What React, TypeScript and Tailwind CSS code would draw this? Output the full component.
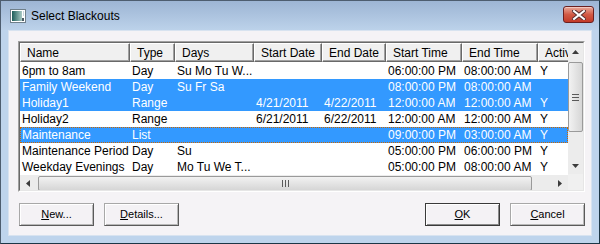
import type { ReactNode } from 'react'

type Row = {
  name: string
  type: string
  days: string
  start: string
  end: string
  st: string
  et: string
  act: string
  sel?: boolean
  focus?: boolean
}

const cols = [
  { key: 'name', label: 'Name', w: 'w-[110px]' },
  { key: 'type', label: 'Type', w: 'w-[45px]' },
  { key: 'days', label: 'Days', w: 'w-[79px]' },
  { key: 'start', label: 'Start Date', w: 'w-[68px]' },
  { key: 'end', label: 'End Date', w: 'w-[64px]' },
  { key: 'st', label: 'Start Time', w: 'w-[76px]' },
  { key: 'et', label: 'End Time', w: 'w-[76px]' },
  { key: 'act', label: 'Active', w: 'w-[50px]' },
] as const

const rows: Row[] = [
  { name: '6pm to 8am', type: 'Day', days: 'Su Mo Tu W...', start: '', end: '', st: '06:00:00 PM', et: '08:00:00 AM', act: 'Y' },
  { name: 'Family Weekend', type: 'Day', days: 'Su Fr Sa', start: '', end: '', st: '08:00:00 PM', et: '08:00:00 AM', act: '', sel: true },
  { name: 'Holiday1', type: 'Range', days: '', start: '4/21/2011', end: '4/22/2011', st: '12:00:00 AM', et: '12:00:00 AM', act: 'Y', sel: true },
  { name: 'Holiday2', type: 'Range', days: '', start: '6/21/2011', end: '6/22/2011', st: '12:00:00 AM', et: '12:00:00 AM', act: 'Y' },
  { name: 'Maintenance', type: 'List', days: '', start: '', end: '', st: '09:00:00 PM', et: '03:00:00 AM', act: 'Y', sel: true, focus: true },
  { name: 'Maintenance Period', type: 'Day', days: 'Su', start: '', end: '', st: '05:00:00 PM', et: '06:00:00 PM', act: 'Y' },
  { name: 'Weekday Evenings', type: 'Day', days: 'Mo Tu We T...', start: '', end: '', st: '05:00:00 PM', et: '08:00:00 AM', act: 'Y' },
]

function Tri({ dir }: { dir: 'up' | 'down' | 'left' | 'right' }) {
  const pts = {
    up: '0,4 7,4 3.5,0',
    down: '0,0 7,0 3.5,4',
    left: '4,0 4,7 0,3.5',
    right: '0,0 0,7 4,3.5',
  }[dir]
  const vert = dir === 'up' || dir === 'down'
  return (
    <svg width={vert ? 7 : 4} height={vert ? 4 : 7} viewBox={vert ? '0 0 7 4' : '0 0 4 7'}>
      <polygon points={pts} fill="#3c3c3c" />
    </svg>
  )
}

function Btn({ children, def }: { children: ReactNode; def?: boolean }) {
  return (
    <div
      className={`w-[75px] h-[23px] flex items-center justify-center text-[11px] text-black bg-[#f4f2f5] ${
        def
          ? 'border border-[#3a3a3a] shadow-[inset_1px_1px_0_#ffffff,inset_-1px_-1px_0_#8a8a8a]'
          : 'border border-[#a8a8a8] border-r-[#5a5a5a] border-b-[#5a5a5a] shadow-[inset_1px_1px_0_#ffffff,inset_-1px_-1px_0_#b8b8b8]'
      }`}
    >
      {children}
    </div>
  )
}

function TitleIcon() {
  return (
    <svg width="16" height="14" viewBox="0 0 16 14">
      <defs>
        <linearGradient id="ti" x1="0" y1="0" x2="1" y2="0">
          <stop offset="0" stopColor="#1d5e5a" />
          <stop offset="1" stopColor="#a9c9c4" />
        </linearGradient>
      </defs>
      <rect x="0.5" y="0.5" width="15" height="13" fill="#ffffff" stroke="#6f7f8a" />
      <rect x="2" y="2" width="10" height="10" fill="url(#ti)" />
      <rect x="12" y="9" width="2" height="3" fill="#4c5a64" />
      <rect x="13" y="2" width="1" height="5" fill="#c9d6dc" />
    </svg>
  )
}

function CloseX() {
  return (
    <svg width="14" height="10" viewBox="0 0 14 10">
      <path d="M2 1 L12 9 M12 1 L2 9" stroke="#5a3030" strokeWidth="4" strokeLinecap="square" />
      <path d="M2 1 L12 9 M12 1 L2 9" stroke="#ffffff" strokeWidth="2" strokeLinecap="square" />
    </svg>
  )
}

export default function App() {
  return (
    <div
      className="w-[600px] h-[244px] flex flex-col border border-[#4d5d6f] border-r-[#1c3646] border-b-[#1c3646] bg-[#bed4ec] overflow-hidden"
      style={{ fontFamily: '"Liberation Sans", Arial, sans-serif' }}
    >
      {/* title bar */}
      <div className="h-[29px] flex items-center pl-[9px] pr-[5px] bg-gradient-to-b from-[#9db5d4] to-[#bcd2ea]">
        <TitleIcon />
        <span className="ml-[5px] text-[12px] text-black">Select Blackouts</span>
        <div className="ml-auto mt-[-2px] w-[31px] h-[17px] rounded-[3px] border border-[#6b2020] flex items-center justify-center bg-gradient-to-b from-[#e8a89a] via-[#d25a45] to-[#c23a28] shadow-[inset_0_1px_0_#f4c8be]">
          <CloseX />
        </div>
      </div>

      {/* client area */}
      <div className="flex-1 mx-[7px] mb-[7px] flex flex-col bg-[#f5f3f6] border border-[#d8e3f0] pl-[9px] pr-[6px] pt-[10px]">
        {/* list view */}
        <div className="w-[567px] h-[151px] border border-[#a0a0a0] border-r-white border-b-white flex">
          <div className="flex-1 border border-[#696969] border-r-[#e6e6e6] border-b-[#e6e6e6] bg-white flex">
            <div className="w-[548px] flex flex-col overflow-hidden">
              {/* header */}
              <div className="h-[19px] flex shrink-0 bg-[#f0f0f0]">
                {cols.map(c => (
                  <div
                    key={c.key}
                    className={`${c.w} shrink-0 h-full flex items-center pl-[6px] text-[12px] text-black whitespace-nowrap overflow-hidden border border-white border-r-[#696969] border-b-[#696969] shadow-[inset_-1px_-1px_0_#a0a0a0]`}
                  >
                    {c.label}
                  </div>
                ))}
              </div>
              {/* rows */}
              <div className="h-[113px] flex flex-col pt-[1px]">
                {rows.map(r => (
                  <div
                    key={r.name}
                    className={`h-[16px] flex shrink-0 text-[12px] whitespace-nowrap ${
                      r.sel ? 'bg-[#3399ff] text-white' : 'text-black'
                    } ${r.focus ? 'outline outline-1 outline-dotted outline-[#cc6600] -outline-offset-1' : ''}`}
                  >
                    {cols.map(c => (
                      <div key={c.key} className={`${c.w} shrink-0 pl-[2px] leading-[16px] overflow-hidden`}>
                        {r[c.key]}
                      </div>
                    ))}
                  </div>
                ))}
              </div>
              {/* horizontal scrollbar */}
              <div className="h-[16px] flex items-center bg-[#ececec] shrink-0">
                <div className="w-[16px] h-full flex items-center justify-center">
                  <Tri dir="left" />
                </div>
                <div className="ml-[2px] w-[494px] h-[15px] rounded-[2px] border border-[#9a9a9a] bg-gradient-to-b from-[#f2f2f2] to-[#d6d6d6] flex items-center justify-center gap-[2px]">
                  <div className="w-[1px] h-[7px] bg-[#5a5a5a]" />
                  <div className="w-[1px] h-[7px] bg-[#5a5a5a]" />
                  <div className="w-[1px] h-[7px] bg-[#5a5a5a]" />
                </div>
                <div className="flex-1" />
                <div className="w-[16px] h-full flex items-center justify-center">
                  <Tri dir="right" />
                </div>
              </div>
            </div>
            {/* vertical scrollbar */}
            <div className="flex-1 flex flex-col bg-[#ececec]">
              <div className="h-[17px] flex items-center justify-center">
                <Tri dir="up" />
              </div>
              <div className="mt-[2px] h-[70px] w-[15px] rounded-[2px] border border-[#9a9a9a] bg-gradient-to-r from-[#f2f2f2] to-[#d6d6d6] flex flex-col items-center justify-center gap-[2px]">
                <div className="w-[7px] h-[1px] bg-[#5a5a5a]" />
                <div className="w-[7px] h-[1px] bg-[#5a5a5a]" />
                <div className="w-[7px] h-[1px] bg-[#5a5a5a]" />
              </div>
              <div className="flex-1" />
              <div className="h-[17px] flex items-center justify-center">
                <Tri dir="down" />
              </div>
              <div className="h-[16px] bg-[#f0f0f0]" />
            </div>
          </div>
        </div>

        {/* buttons */}
        <div className="mt-[11px] flex items-center pl-[1px]">
          <div className="flex gap-[10px]">
            <Btn>
              <span><u>N</u>ew...</span>
            </Btn>
            <Btn>
              <span><u>D</u>etails...</span>
            </Btn>
          </div>
          <div className="ml-auto flex gap-[10px]">
            <Btn def>
              <span><u>O</u>K</span>
            </Btn>
            <Btn>
              <span><u>C</u>ancel</span>
            </Btn>
          </div>
        </div>
      </div>
    </div>
  )
}
